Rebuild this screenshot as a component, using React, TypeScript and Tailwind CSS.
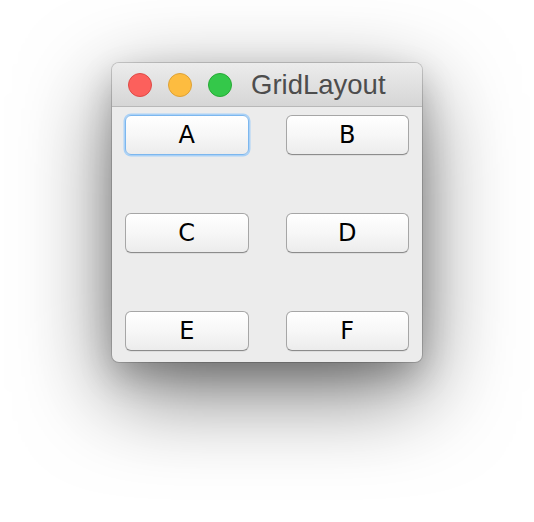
import React from "react";

const labels = ["A", "B", "C", "D", "E", "F"];

function TrafficLight({ color, border }: { color: string; border: string }) {
  return <span className={`block h-6 w-6 rounded-full border ${color} ${border}`} />;
}

function GridButton({ label, focused }: { label: string; focused?: boolean }) {
  return (
    <button
      type="button"
      className={
        focused
          ? "flex h-10 items-center justify-center rounded-[6px] border border-[#7db7ee] bg-gradient-to-b from-white via-[#f7f7f7] to-[#ececec] text-[24px] text-black shadow-[0_0_0_1.5px_#a9d1f7]"
          : "flex h-10 items-center justify-center rounded-[6px] border border-[#a6a6a6] border-b-[#8c8c8c] bg-gradient-to-b from-white via-[#f7f7f7] to-[#ececec] text-[24px] text-black shadow-[0_1px_0_rgba(0,0,0,0.06)]"
      }
      style={{ fontFamily: '"DejaVu Sans", "Liberation Sans", sans-serif' }}
    >
      {label}
    </button>
  );
}

export default function App() {
  return (
    <div className="h-[522px] w-[534px] bg-white pl-[112px] pt-[63px]">
      <div className="flex h-[299px] w-[310px] flex-col overflow-hidden rounded-[7px] bg-[#ececec] shadow-[0_30px_90px_rgba(0,0,0,0.55),0_14px_34px_rgba(0,0,0,0.2),0_0_0_1px_rgba(0,0,0,0.16)]">
        <div className="flex h-[44px] items-center border-b border-[#b8b8b8] bg-gradient-to-b from-[#ececec] to-[#d6d6d6] pl-4">
          <div className="flex gap-4">
            <TrafficLight color="bg-[#fc605c]" border="border-[#de4a46]" />
            <TrafficLight color="bg-[#fdbc40]" border="border-[#dea236]" />
            <TrafficLight color="bg-[#34c84a]" border="border-[#27aa35]" />
          </div>
          <span
            className="ml-[19px] text-[27.5px] leading-none text-[#4d4d4d]"
            style={{ fontFamily: '"Liberation Sans", Arial, sans-serif' }}
          >
            GridLayout
          </span>
        </div>
        <div className="grid grid-cols-2 gap-x-[37px] gap-y-[58px] px-[13px] pt-[8px]">
          {labels.map((label, index) => (
            <GridButton key={label} label={label} focused={index === 0} />
          ))}
        </div>
      </div>
    </div>
  );
}
